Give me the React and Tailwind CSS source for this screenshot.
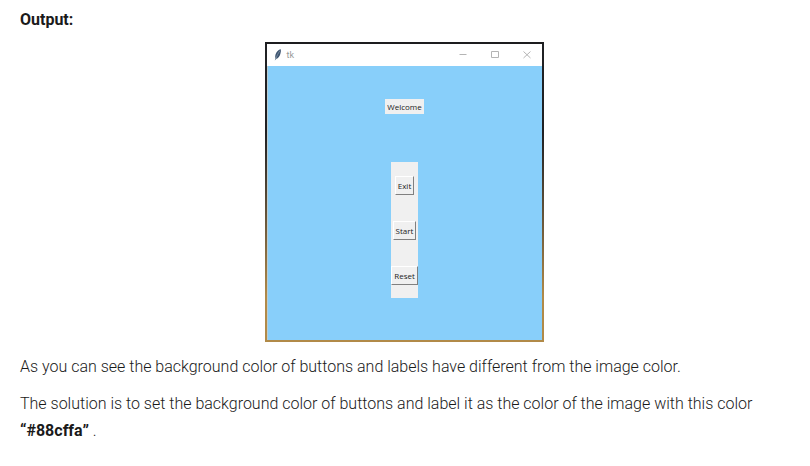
import React from "react";

function FeatherIcon() {
  return (
    <svg className="h-3 w-2" viewBox="0 0 8 12" aria-hidden="true">
      <path d="M6.7 0.3C4.6 0.7 2.4 2.8 1.6 5.2C1.1 6.8 1.1 8.2 1.5 9.3L0.8 11.6L2.1 10C4.3 9.1 5.8 7 6.4 4.7C6.9 2.9 7.2 1.2 6.7 0.3Z" fill="#3d5470" />
      <path d="M6.2 1.4C4.4 3.8 2.9 6.5 1.4 11" fill="none" stroke="#9aa9b8" strokeWidth="0.6" />
    </svg>
  );
}

function TitleBar() {
  return (
    <header className="flex h-[22px] items-center bg-white pl-[7px] pr-[11px] text-[#b4b4b4]">
      <FeatherIcon />
      <span className="ml-[5px] font-[Roboto,sans-serif] text-[9px] leading-3 text-[#999]">tk</span>
      <div className="ml-auto flex items-center gap-6">
        <button type="button" aria-label="Minimize" className="flex size-2 items-center">
          <svg className="size-2" viewBox="0 0 8 8" fill="none" stroke="currentColor">
            <path d="M0.5 3.5H7.5" />
          </svg>
        </button>
        <button type="button" aria-label="Maximize" className="flex size-2 items-center">
          <svg className="size-2" viewBox="0 0 8 8" fill="none" stroke="currentColor">
            <path d="M0.5 0.5H7.5V6.5H0.5Z" />
          </svg>
        </button>
        <button type="button" aria-label="Close" className="flex size-2 items-center">
          <svg className="size-2" viewBox="0 0 8 8" fill="none" stroke="currentColor">
            <path d="M0.5 0.5L7.5 7M7.5 0.5L0.5 7" />
          </svg>
        </button>
      </div>
    </header>
  );
}

function TkButton({ children }) {
  return (
    <button
      type="button"
      className="h-[19px] border border-t-white border-r-[#808080] border-b-[#808080] border-l-white bg-[#f0f0f0] px-[2px] leading-4"
    >
      {children}
    </button>
  );
}

function TkWindow() {
  return (
    <section className="w-[279px] bg-linear-to-b from-[#202124] from-30% to-[#b18a48] to-85% px-[2px] pb-[2px] font-normal">
      <div className="-mx-[2px] h-[2px] bg-[#1d1d1f]" />
      <TitleBar />
      <div className="flex h-[274px] flex-col items-center border-l border-[#b9cdd3] bg-[#88cffa] pt-[33px] font-['Open_Sans',sans-serif] text-[8px] text-[#222]">
        <span className="bg-[#f0f0f0] px-[2px] leading-[15px]">Welcome</span>
        <div className="mt-12 flex w-[27px] flex-col items-center gap-[26px] bg-[#f0f0f0] pt-[14px] pb-[13px]">
          <TkButton>Exit</TkButton>
          <TkButton>Start</TkButton>
          <TkButton>Reset</TkButton>
        </div>
      </div>
    </section>
  );
}

export default function App() {
  return (
    <main className="bg-white pr-[22px] pl-5 pt-[6px] pb-5 font-[Roboto,sans-serif] text-base leading-[27px] font-light text-[#1a1a1a]">
      <p>
        <strong className="font-bold">Output:</strong>
      </p>
      <figure className="mt-[9px] flex justify-center">
        <TkWindow />
      </figure>
      <p className="mt-[11px]">
        As you can see the background color of buttons and labels have different from the image color.
      </p>
      <p className="mt-[10px]">
        The solution is to set the background color of buttons and label it as the color of the image with this color{" "}
        <strong className="font-bold">“#88cffa”</strong> .
      </p>
    </main>
  );
}
